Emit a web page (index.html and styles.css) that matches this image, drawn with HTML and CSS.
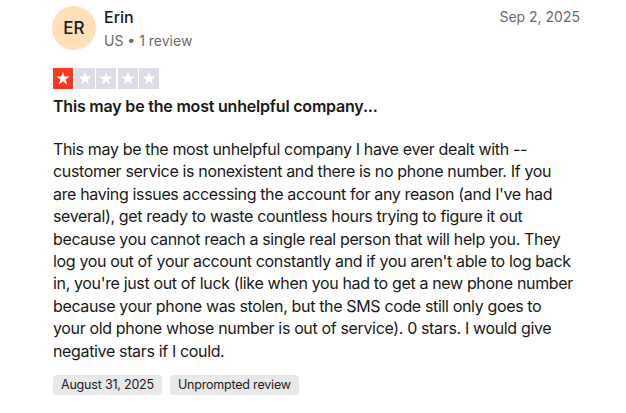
FILE: index.html
```html
<!DOCTYPE html>
<html>
<head>
<meta charset="utf-8">
<link rel="stylesheet" href="styles.css">
</head>
<body>
<article class="review">
  <header class="head">
    <div class="user">
      <div class="avatar">ER</div>
      <div class="meta">
        <div class="name">Erin</div>
        <div class="sub">US • 1 review</div>
      </div>
    </div>
    <time class="date">Sep 2, 2025</time>
  </header>
  <div class="stars">
    <span class="star on"><svg viewBox="0 0 20 20"><path d="M10 3.2l1.6 4.9h5.1l-4.1 3 1.6 4.9L10 13l-4.2 3 1.6-4.9-4.1-3h5.1z"/></svg></span>
    <span class="star"><svg viewBox="0 0 20 20"><path d="M10 3.2l1.6 4.9h5.1l-4.1 3 1.6 4.9L10 13l-4.2 3 1.6-4.9-4.1-3h5.1z"/></svg></span>
    <span class="star"><svg viewBox="0 0 20 20"><path d="M10 3.2l1.6 4.9h5.1l-4.1 3 1.6 4.9L10 13l-4.2 3 1.6-4.9-4.1-3h5.1z"/></svg></span>
    <span class="star"><svg viewBox="0 0 20 20"><path d="M10 3.2l1.6 4.9h5.1l-4.1 3 1.6 4.9L10 13l-4.2 3 1.6-4.9-4.1-3h5.1z"/></svg></span>
    <span class="star"><svg viewBox="0 0 20 20"><path d="M10 3.2l1.6 4.9h5.1l-4.1 3 1.6 4.9L10 13l-4.2 3 1.6-4.9-4.1-3h5.1z"/></svg></span>
  </div>
  <h2 class="title">This may be the most unhelpful company...</h2>
  <p class="body">This may be the most unhelpful company I have ever dealt with --<br>customer service is nonexistent and there is no phone number. If you<br>are having issues accessing the account for any reason (and I've had<br>several), get ready to waste countless hours trying to figure it out<br>because you cannot reach a single real person that will help you. They<br>log you out of your account constantly and if you aren't able to log back<br>in, you're just out of luck (like when you had to get a new phone number<br>because your phone was stolen, but the SMS code still only goes to<br>your old phone whose number is out of service). 0 stars. I would give<br>negative stars if I could.</p>
  <div class="tags">
    <span class="tag">August 31, 2025</span>
    <span class="tag">Unprompted review</span>
  </div>
</article>
</body>
</html>
```
FILE: styles.css
```css
html, body {
  margin: 0;
  background: #ffffff;
}
body {
  font-family: Inter, "Noto Sans", sans-serif;
  color: #191919;
}
.review {
  width: 527px;
  padding: 6px 0 0 53px;
}
.head {
  display: flex;
  justify-content: space-between;
  align-items: flex-start;
}
.user {
  display: flex;
  gap: 8px;
}
.avatar {
  width: 44px;
  height: 44px;
  border-radius: 50%;
  background: #ffe0b8;
  display: flex;
  align-items: center;
  justify-content: center;
  font-size: 17px;
  font-weight: 500;
  color: #1c1c1c;
  margin-left: -1px;
}
.meta {
  display: flex;
  flex-direction: column;
  gap: 2px;
}
.name {
  font-size: 16px;
  font-weight: 500;
  line-height: 22px;
}
.sub {
  font-size: 14px;
  line-height: 22px;
  color: #6b6b6b;
}
.date {
  font-size: 14px;
  line-height: 22px;
  color: #6b6b6b;
}
.stars {
  display: flex;
  gap: 1.5px;
  margin-top: 16px;
}
.star {
  width: 20px;
  height: 21px;
  background: #dcdce6;
  display: flex;
}
.star.on {
  background: #ff3722;
}
.star svg {
  width: 20px;
  height: 21px;
  fill: #ffffff;
}
.title {
  font-size: 16px;
  font-weight: 600;
  line-height: 24px;
  letter-spacing: -0.2px;
  margin: 5px 0 0;
}
.body {
  font-size: 16px;
  line-height: 22.4px;
  letter-spacing: -0.35px;
  margin: 20px -40px 0 0;
  white-space: nowrap;
}
.tags {
  display: flex;
  gap: 8px;
  margin-top: 13px;
}
.tag {
  background: #e8e8e8;
  border-radius: 4px;
  font-size: 12.5px;
  line-height: 20px;
  padding: 0 8px;
  color: #1c1c1c;
  letter-spacing: -0.2px;
}
```
